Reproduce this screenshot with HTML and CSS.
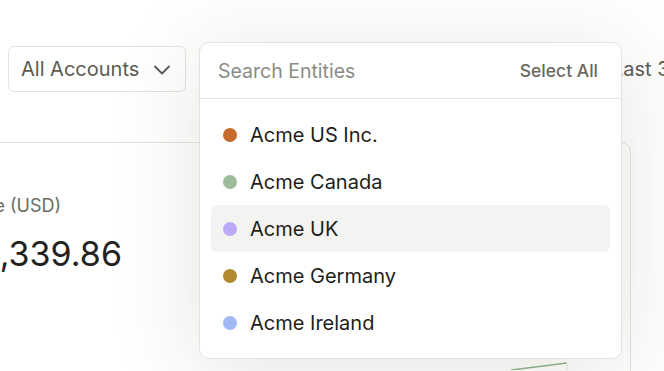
FILE: index.html
```html
<!DOCTYPE html>
<html>

<head>
    <meta charset="utf-8">
    <title>Balances</title>
    <link rel="stylesheet" href="styles.css">
</head>

<body>
    <div class="page">
        <!-- Filters row -->
        <div class="toolbar">
            <button class="select-btn accounts">
                <span>All Accounts</span>
                <svg class="chevron" width="18" height="10" viewBox="0 0 18 10">
                    <path d="M2 1.5 L9 8.5 L16 1.5" fill="none" stroke="#5b5b52" stroke-width="1.8" stroke-linecap="round" stroke-linejoin="round" />
                </svg>
            </button>

            <div class="entity-picker">
                <button class="select-btn entities">All Entities</button>

                <!-- Open entity dropdown -->
                <div class="dropdown">
                    <div class="dropdown-head">
                        <input class="search" type="text" placeholder="Search Entities">
                        <span class="select-all">Select All</span>
                    </div>
                    <ul class="entity-list">
                        <li><span class="dot" style="background:#c66a30"></span>Acme US Inc.</li>
                        <li><span class="dot" style="background:#9dbc99"></span>Acme Canada</li>
                        <li class="active"><span class="dot" style="background:#bba9f7"></span>Acme UK</li>
                        <li><span class="dot" style="background:#b3892f"></span>Acme Germany</li>
                        <li><span class="dot" style="background:#9fb9f5"></span>Acme Ireland</li>
                    </ul>
                </div>
            </div>

            <button class="select-btn period">Last 30 Days</button>
        </div>

        <!-- Balance card -->
        <div class="card">
            <div class="card-label">Total Balance (USD)</div>
            <div class="card-value">$1,248,339.86</div>
            <svg class="chart" width="200" height="40" viewBox="0 0 200 40">
                <path d="M0 40 L56 33" fill="none" stroke="#8db88b" stroke-width="1.5" />
                <path d="M56 33 L56 40" fill="none" stroke="#e2e6df" stroke-width="1" />
            </svg>
        </div>
    </div>
</body>

</html>
```

FILE: styles.css
```css
body {
    font-family: Inter, "Noto Sans", sans-serif;
    background-color: #fff;
    margin: 0;
    padding: 0;
    overflow: hidden;
}

.page {
    width: 664px;
    height: 371px;
    overflow: hidden;
    position: relative;
}

.toolbar {
    display: flex;
    align-items: center;
    padding: 46px 0 0 8px;
    gap: 13px;
}

.select-btn {
    font-family: inherit;
    font-size: 20px;
    color: #5b5b52;
    background: #fff;
    border: 1px solid #e4e4e1;
    border-radius: 6px;
    height: 46px;
    padding: 0 12px;
    display: flex;
    align-items: center;
    white-space: nowrap;
    flex-shrink: 0;
}

.accounts {
    width: 178px;
    justify-content: space-between;
    padding: 0 14px 0 12px;
}

.chevron {
    margin-top: 1px;
}

.entity-picker {
    position: relative;
    width: 400px;
    flex-shrink: 0;
}

.entities {
    width: 100%;
}

.period {
    border: none;
    padding: 0;
    background: none;
}

/* dropdown lies over the toolbar and card */
.dropdown {
    position: absolute;
    top: -4px;
    left: 0;
    width: 421px;
    height: 315px;
    background: #fff;
    border: 1px solid #e2e2df;
    border-radius: 10px;
    box-shadow: 0 12px 90px rgba(50, 50, 30, 0.13);
    z-index: 10;
}

.dropdown-head {
    display: flex;
    align-items: center;
    justify-content: space-between;
    height: 55px;
    padding: 0 23px 0 18px;
    border-bottom: 1px solid #e4e4e1;
}

.search {
    font-family: inherit;
    font-size: 19.5px;
    border: none;
    outline: none;
    padding: 0;
    width: 250px;
    color: #222;
}

.search::placeholder {
    color: #8b8b83;
}

.select-all {
    font-size: 17.5px;
    font-weight: 500;
    color: #6a6a61;
}

.entity-list {
    list-style-type: none;
    margin: 0;
    padding: 12px 11px;
}

.entity-list li {
    display: flex;
    align-items: center;
    height: 47px;
    padding-left: 12px;
    font-size: 20px;
    color: #1e1e1a;
    border-radius: 6px;
}

.entity-list li.active {
    background-color: #f3f3f1;
}

.dot {
    width: 14px;
    height: 14px;
    border-radius: 50%;
    margin-right: 13px;
    flex-shrink: 0;
}

.card {
    margin: 50px 0 0 -300px;
    width: 931px;
    height: 300px;
    border: 1px solid #e4e4e1;
    border-radius: 10px;
    padding: 52px 0 0 1px;
    box-sizing: border-box;
    position: relative;
}

/* card text starts off the left edge of the window */
.card-label {
    width: 359px;
    text-align: right;
    font-size: 18px;
    color: #6b6b62;
}

.card-value {
    width: 420px;
    text-align: right;
    font-size: 34px;
    color: #22221e;
    margin-top: 17px;
}

.chart {
    position: absolute;
    left: 810px;
    top: 187px;
}
```
